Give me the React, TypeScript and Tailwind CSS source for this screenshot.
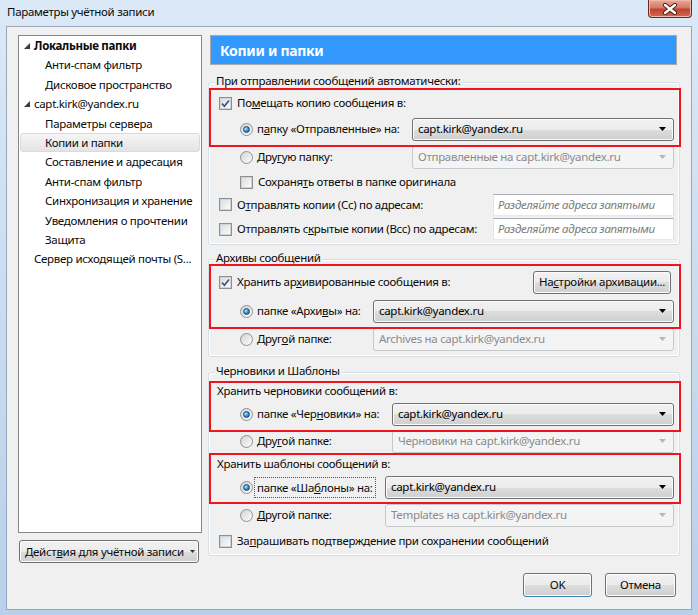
import React from "react";

// ---------------- small Win7 controls ----------------
function CheckBox({ checked }: { checked?: boolean }) {
  return (
    <span className="flex h-[13px] w-[13px] shrink-0 items-center justify-center border border-[#8e8f8f] bg-white">
      <span className="flex h-[11px] w-[11px] items-center justify-center border border-[#d0d3d7] bg-gradient-to-br from-[#dcdde0] to-[#fbfbfb]">
        {checked && (
          <svg width="9" height="9" viewBox="0 0 9 9">
            <path d="M1 4.6 L3.4 7.2 L8 1.4" fill="none" stroke="#3d4f86" strokeWidth="1.6" />
          </svg>
        )}
      </span>
    </span>
  );
}

function Radio({ checked }: { checked?: boolean }) {
  return (
    <span className="flex h-[13px] w-[13px] shrink-0 items-center justify-center rounded-full border border-[#8e8f8f] bg-gradient-to-br from-[#d3d4d6] to-[#fdfdfd]">
      {checked && (
        <span className="h-[7px] w-[7px] rounded-full border border-[#1a4f7f] bg-[radial-gradient(circle_at_35%_35%,#b9e6fc,#2a8ad0_55%,#0b4a86)]" />
      )}
    </span>
  );
}

function Arrow({ disabled }: { disabled?: boolean }) {
  return (
    <svg width="7" height="4" viewBox="0 0 7 4" className="shrink-0">
      <path d="M0 0 L7 0 L3.5 4 Z" fill={disabled ? "#b6b6b6" : "#000"} />
    </svg>
  );
}

function Combo({ value, disabled, w }: { value: string; disabled?: boolean; w: string }) {
  return (
    <div
      className={`flex h-[23px] shrink-0 items-center justify-between rounded-[3px] border pl-[5px] pr-[7px] ${w} ${
        disabled
          ? "border-[#c6c9cc] bg-[#f4f4f4] text-[#8b8b8b]"
          : "border-[#707070] bg-[linear-gradient(#f2f2f2,#ebebeb_50%,#dddddd_50%,#cfcfcf)] text-black shadow-[inset_0_0_0_1px_#fbfbfb]"
      }`}
    >
      <span>{value}</span>
      <Arrow disabled={disabled} />
    </div>
  );
}

function AddrInput() {
  return (
    <div className="flex h-[22px] w-[181px] shrink-0 items-center border border-[#abadb3] border-l-[#e2e3ea] border-b-[#e3e9ef] border-r-[#dbdfe6] bg-white pl-[4px] italic text-[#7a7a7a]">
      Разделяйте адреса запятыми
    </div>
  );
}

function Legend({ children }: { children: React.ReactNode }) {
  return (
    <span className="absolute left-[6px] top-[-10px] bg-[#f0f0f0] px-[1px] leading-[16px]">{children}</span>
  );
}

const btn =
  "flex items-center justify-center rounded-[3px] border border-[#707070] bg-[linear-gradient(#f2f2f2,#ebebeb_50%,#dddddd_50%,#cfcfcf)] shadow-[inset_0_0_0_1px_#fcfcfc]";

// ---------------- tree ----------------
const tree: { label: string; level: 0 | 1; bold?: boolean; open?: boolean; selected?: boolean }[] = [
  { label: "Локальные папки", level: 0, bold: true, open: true },
  { label: "Анти-спам фильтр", level: 1 },
  { label: "Дисковое пространство", level: 1 },
  { label: "capt.kirk@yandex.ru", level: 0, open: true },
  { label: "Параметры сервера", level: 1 },
  { label: "Копии и папки", level: 1, selected: true },
  { label: "Составление и адресация", level: 1 },
  { label: "Анти-спам фильтр", level: 1 },
  { label: "Синхронизация и хранение", level: 1 },
  { label: "Уведомления о прочтении", level: 1 },
  { label: "Защита", level: 1 },
  { label: "Сервер исходящей почты (S...", level: 0 },
];

export default function App() {
  return (
    <div className="h-[615px] w-[698px] overflow-hidden whitespace-nowrap bg-gradient-to-b from-[#dce9f7] via-[#c9dcf0] to-[#b9d0ea] font-['Noto_Sans',sans-serif] text-[11.5px] tracking-[-0.3px] text-[#0a0a0a]">
      {/* title bar */}
      <div className="flex h-[26px] items-center justify-between pl-[7px] pr-[6px]">
        <span className="pb-[2px]">Параметры учётной записи</span>
        <div className="flex h-[18px] w-[44px] items-center justify-center self-start rounded-b-[4px] border border-t-0 border-[#6b2a20] bg-[linear-gradient(#e9a898,#d47a65_45%,#c2432c_55%,#d5694e)] shadow-[inset_0_0_0_1px_#f0b9a9]">
          <svg width="16" height="12" viewBox="0 0 16 12">
            <path d="M3 2 L13 10 M13 2 L3 10" stroke="#4a1a12" strokeWidth="4.2" strokeLinecap="round" />
            <path d="M3 2 L13 10 M13 2 L3 10" stroke="#fff" strokeWidth="2.4" strokeLinecap="round" />
          </svg>
        </div>
      </div>

      {/* client area */}
      <div className="mx-[6px] flex h-[584px] border border-[#98a8bc] bg-[#f0f0f0] pl-[11px] pr-[11px] pt-[8px]">
        {/* left column */}
        <div className="flex w-[184px] shrink-0 flex-col">
          <div className="h-[498px] border border-[#828790] bg-white">
            {tree.map((t, i) => (
              <div
                key={i}
                className={`mx-[1px] flex h-[19.4px] items-center rounded-[3px] border ${
                  t.selected ? "border-[#dadada] bg-gradient-to-b from-[#f5f5f5] to-[#e4e4e4]" : "border-transparent"
                } ${t.level === 0 ? "pl-[3px]" : "pl-[24px]"}`}
              >
                {t.level === 0 && (
                  <span className="flex w-[10px] shrink-0 items-center">
                    {t.open && (
                      <svg width="6" height="6" viewBox="0 0 6 6">
                        <path d="M6 0 L6 6 L0 6 Z" fill="#3c3c3c" />
                      </svg>
                    )}
                  </span>
                )}
                <span className={t.bold ? "font-bold" : ""}>{t.label}</span>
              </div>
            ))}
          </div>
          <div className={`mt-[7px] ml-[1px] h-[23px] w-[180px] !justify-start gap-[6px] pl-[5px] ${btn}`}>
            <span>
              Дейст<u>в</u>ия для учётной записи
            </span>
            <svg width="5" height="3" viewBox="0 0 5 3">
              <path d="M0 0 L5 0 L2.5 3 Z" fill="#333" />
            </svg>
          </div>
        </div>

        {/* right column */}
        <div className="relative ml-[6px] flex w-[472px] shrink-0 flex-col">
          <div className="ml-[2px] flex h-[30px] w-[467px] items-center border border-[#a9a9a9] bg-[#3399ff] pl-[9px] text-[14px] font-bold tracking-[-0.3px] text-white">
            Копии и папки
          </div>

          {/* group 1 */}
          <div className="relative mt-[17px] rounded-[3px] border border-[#d5dfe5] pb-[2px] pt-[8px] shadow-[inset_0_0_0_1px_#fff]">
            <Legend>При отправлении сообщений автоматически:</Legend>
            <div className="flex h-[24px] items-center gap-[5px] pl-[10px]">
              <CheckBox checked />
              <span>
                По<u>м</u>ещать копию сообщения в:
              </span>
            </div>
            <div className="flex h-[28px] items-center justify-between pl-[31px] pr-[5px]">
              <div className="flex items-center gap-[4px]">
                <Radio checked />
                <span>
                  п<u>а</u>пку «Отправленные» на:
                </span>
              </div>
              <Combo value="capt.kirk@yandex.ru" w="w-[262px]" />
            </div>
            <div className="flex h-[28px] items-center justify-between pl-[31px] pr-[5px]">
              <div className="flex items-center gap-[4px]">
                <Radio />
                <span>
                  Дру<u>г</u>ую папку:
                </span>
              </div>
              <Combo value="Отправленные на capt.kirk@yandex.ru" disabled w="w-[262px]" />
            </div>
            <div className="flex h-[22px] items-center gap-[5px] pl-[31px]">
              <CheckBox />
              <span>
                Сохраня<u>т</u>ь ответы в папке оригинала
              </span>
            </div>
            <div className="flex h-[23px] items-center justify-between pl-[10px] pr-[5px]">
              <div className="flex items-center gap-[5px]">
                <CheckBox />
                <span>
                  О<u>т</u>правлять копии (Cc) по адресам:
                </span>
              </div>
              <AddrInput />
            </div>
            <div className="flex h-[26px] items-center justify-between pl-[10px] pr-[5px]">
              <div className="flex items-center gap-[5px]">
                <CheckBox />
                <span>
                  Отправлять с<u>к</u>рытые копии (Bcc) по адресам:
                </span>
              </div>
              <AddrInput />
            </div>
          </div>

          {/* group 2 */}
          <div className="relative mt-[14px] rounded-[3px] border border-[#d5dfe5] pb-[5px] pt-[9px] shadow-[inset_0_0_0_1px_#fff]">
            <Legend>Архивы сообщений</Legend>
            <div className="flex h-[26px] items-center justify-between pl-[10px] pr-[8px]">
              <div className="flex items-center gap-[5px]">
                <CheckBox checked />
                <span>
                  Хранить ар<u>х</u>ивированные сообщения в:
                </span>
              </div>
              <div className={`h-[23px] w-[138px] ${btn}`}>
                <span>
                  На<u>с</u>тройки архивации...
                </span>
              </div>
            </div>
            <div className="flex h-[32px] items-center justify-between pl-[31px] pr-[5px]">
              <div className="flex items-center gap-[4px]">
                <Radio checked />
                <span>
                  папке «Архи<u>в</u>ы» на:
                </span>
              </div>
              <Combo value="capt.kirk@yandex.ru" w="w-[301px]" />
            </div>
            <div className="flex h-[24px] items-center justify-between pl-[31px] pr-[5px]">
              <div className="flex items-center gap-[4px]">
                <Radio />
                <span>
                  Друг<u>о</u>й папке:
                </span>
              </div>
              <Combo value="Archives на capt.kirk@yandex.ru" disabled w="w-[301px]" />
            </div>
          </div>

          {/* group 3 */}
          <div className="relative mt-[15px] rounded-[3px] border border-[#d5dfe5] pb-[2px] pt-[8px] shadow-[inset_0_0_0_1px_#fff]">
            <Legend>Черновики и Шаблоны</Legend>
            <div className="flex h-[20px] items-center pl-[8px]">Хранить черновики сообщений в:</div>
            <div className="flex h-[26px] items-center justify-between pl-[31px] pr-[5px]">
              <div className="flex items-center gap-[4px]">
                <Radio checked />
                <span>
                  папке «Чер<u>н</u>овики» на:
                </span>
              </div>
              <Combo value="capt.kirk@yandex.ru" w="w-[282px]" />
            </div>
            <div className="flex h-[28px] items-center justify-between pl-[31px] pr-[5px]">
              <div className="flex items-center gap-[4px]">
                <Radio />
                <span>
                  Дру<u>г</u>ой папке:
                </span>
              </div>
              <Combo value="Черновики на capt.kirk@yandex.ru" disabled w="w-[282px]" />
            </div>
            <div className="flex h-[18px] items-center pl-[8px]">Хранить шаблоны сообщений в:</div>
            <div className="flex h-[28px] items-center justify-between pl-[31px] pr-[5px]">
              <div className="flex items-center gap-[1px]">
                <Radio checked />
                <span className="border border-dotted border-[#555] px-[2px] leading-[19px]">
                  папке «Ша<u>б</u>лоны» на:
                </span>
              </div>
              <Combo value="capt.kirk@yandex.ru" w="w-[289px]" />
            </div>
            <div className="flex h-[28px] items-center justify-between pl-[31px] pr-[5px]">
              <div className="flex items-center gap-[4px]">
                <Radio />
                <span>
                  <u>Д</u>ругой папке:
                </span>
              </div>
              <Combo value="Templates на capt.kirk@yandex.ru" disabled w="w-[289px]" />
            </div>
            <div className="flex h-[24px] items-center gap-[5px] pl-[10px]">
              <CheckBox />
              <span>
                За<u>п</u>рашивать подтверждение при сохранении сообщений
              </span>
            </div>
          </div>

          {/* dialog buttons */}
          <div className="mt-[17px] flex justify-end gap-[13px] pr-[4px]">
            <div className={`h-[24px] w-[69px] !border-[#3c7fb1] shadow-[inset_0_0_0_1px_#b9e3f7] ${btn}`}>OK</div>
            <div className={`h-[24px] w-[71px] ${btn}`}>Отмена</div>
          </div>

          {/* red highlight frames drawn over the form */}
          <div className="pointer-events-none absolute left-[1px] top-[53px] h-[59px] w-[472px] border-2 border-[#f0141e]" />
          <div className="pointer-events-none absolute left-[1px] top-[229px] h-[65px] w-[472px] border-2 border-[#f0141e]" />
          <div className="pointer-events-none absolute left-[1px] top-[346px] h-[51px] w-[472px] border-2 border-[#f0141e]" />
          <div className="pointer-events-none absolute left-[1px] top-[418px] h-[51px] w-[472px] border-2 border-[#f0141e]" />
        </div>
      </div>
    </div>
  );
}
